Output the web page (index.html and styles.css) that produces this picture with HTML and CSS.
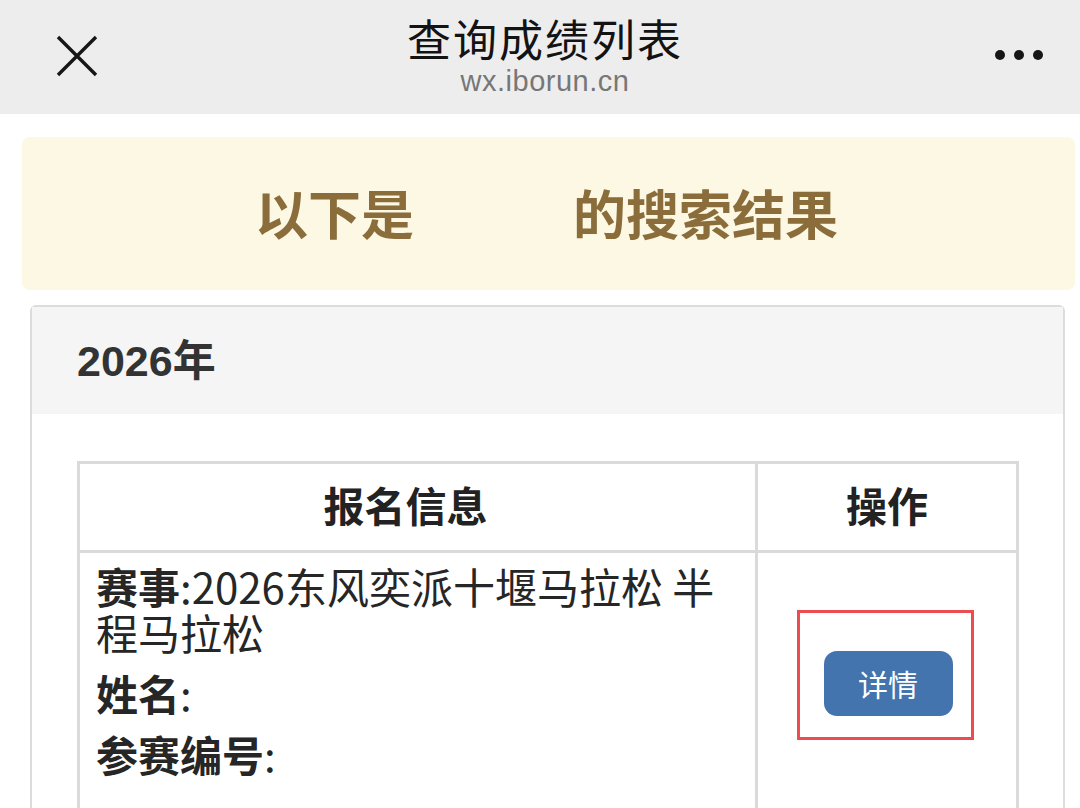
FILE: index.html
```html
<!DOCTYPE html>
<html lang="zh-CN">
<head>
<meta charset="utf-8">
<title>查询成绩列表</title>
<link rel="stylesheet" href="styles.css">
</head>
<body>
<header class="topbar">
  <div class="close">
    <svg width="44" height="44" viewBox="0 0 44 44"><path d="M3 3 L41 41 M41 3 L3 41" stroke="#161616" stroke-width="3.4" stroke-linecap="butt" fill="none"/></svg>
  </div>
  <div class="titles">
    <div class="title">查询成绩列表</div>
    <div class="subtitle">wx.iborun.cn</div>
  </div>
  <div class="more">
    <span class="dot"></span><span class="dot"></span><span class="dot"></span>
  </div>
</header>

<main class="content">
  <div class="notice">以下是<span class="blank"></span>的搜索结果</div>

  <section class="panel">
    <div class="panel-heading">2026年</div>
    <div class="panel-body">
      <table class="results">
        <thead>
          <tr><th class="col-info">报名信息</th><th class="col-op">操作</th></tr>
        </thead>
        <tbody>
          <tr>
            <td class="info">
              <p><b>赛事</b>:2026东风奕派十堰马拉松 半程马拉松</p>
              <p><b>姓名</b>:</p>
              <p><b>参赛编号</b>:</p>
            </td>
            <td class="op">
              <div class="mark"><a class="btn">详情</a></div>
            </td>
          </tr>
        </tbody>
      </table>
    </div>
  </section>
</main>
</body>
</html>
```

FILE: styles.css
```css
* { box-sizing: border-box; }
html, body { margin: 0; padding: 0; }
body {
  width: 1080px;
  height: 808px;
  overflow: hidden;
  background: #fff;
  font-family: "Liberation Sans", "Noto Sans CJK SC", sans-serif;
  color: #222;
}
.topbar {
  height: 114px;
  background: #ededed;
  display: flex;
  align-items: flex-start;
  justify-content: space-between;
}
.close {
  width: 150px;
  padding: 34px 0 0 55px;
}
.close svg { display: block; }
.titles {
  flex: 1;
  text-align: center;
  padding-top: 14px;
}
.title {
  font-family: "Noto Sans CJK SC", sans-serif;
  font-size: 44px;
  line-height: 48px;
  color: #131313;
  letter-spacing: 2px;
}
.subtitle {
  margin-top: 4px;
  font-family: "Liberation Sans", sans-serif;
  font-size: 29px;
  line-height: 30px;
  color: #777;
  letter-spacing: 0.5px;
}
.more {
  width: 140px;
  display: flex;
  justify-content: flex-end;
  gap: 9px;
  padding: 50px 37px 0 0;
}
.dot {
  width: 10px;
  height: 10px;
  border-radius: 50%;
  background: #161616;
}
.content {
  padding: 23px 5px 0 22px;
}
.notice {
  height: 153px;
  background: #fcf8e3;
  border-radius: 8px;
  color: #8a6d3b;
  font-family: "Noto Sans CJK SC", sans-serif;
  font-weight: 700;
  font-size: 53px;
  display: flex;
  align-items: center;
  justify-content: center;
  padding: 0 4px 4px 0;
}
.blank {
  display: inline-block;
  width: 3em;
}
.panel {
  margin: 15px 10px 0 8px;
  border: 2px solid #dcdcdc;
  border-bottom: none;
  border-radius: 6px 6px 0 0;
  height: 520px;
}
.panel-heading {
  height: 107px;
  background: #f5f5f5;
  padding: 0 0 8px 45px;
  display: flex;
  align-items: center;
  font-family: "Liberation Sans", "Noto Sans CJK SC", sans-serif;
  font-weight: 700;
  font-size: 43px;
  color: #333;
}
.panel-body {
  padding: 47px 44px 0 45px;
}
.results {
  width: 100%;
  border-collapse: collapse;
  border: 3px solid #dadada;
}
.results th, .results td {
  border: 3px solid #dadada;
}
.results th {
  height: 89px;
  font-family: "Noto Sans CJK SC", sans-serif;
  font-weight: 700;
  font-size: 41px;
  color: #222;
  text-align: center;
  vertical-align: middle;
  padding: 0 0 6px;
}
.col-info { width: 678px; padding-right: 24px !important; }
.info {
  padding: 10px 16px 24px 16px;
  vertical-align: top;
  font-family: "Noto Sans CJK SC", sans-serif;
  font-size: 42px;
  line-height: 46px;
  color: #262626;
}
.info p { margin: 0 0 15px; }
.info b { font-weight: 700; }
.op {
  text-align: center;
  vertical-align: middle;
  padding: 0 0 20px;
}
.mark {
  display: inline-block;
  border: 3px solid #ec4c4f;
  padding: 38px 18px 21px 24px;
  margin-right: 4px;
}
.btn {
  display: block;
  width: 129px;
  height: 65px;
  line-height: 65px;
  border-radius: 13px;
  background: #4474ae;
  color: #fff;
  font-family: "Noto Sans CJK SC", sans-serif;
  font-size: 30px;
  text-align: center;
}
```
